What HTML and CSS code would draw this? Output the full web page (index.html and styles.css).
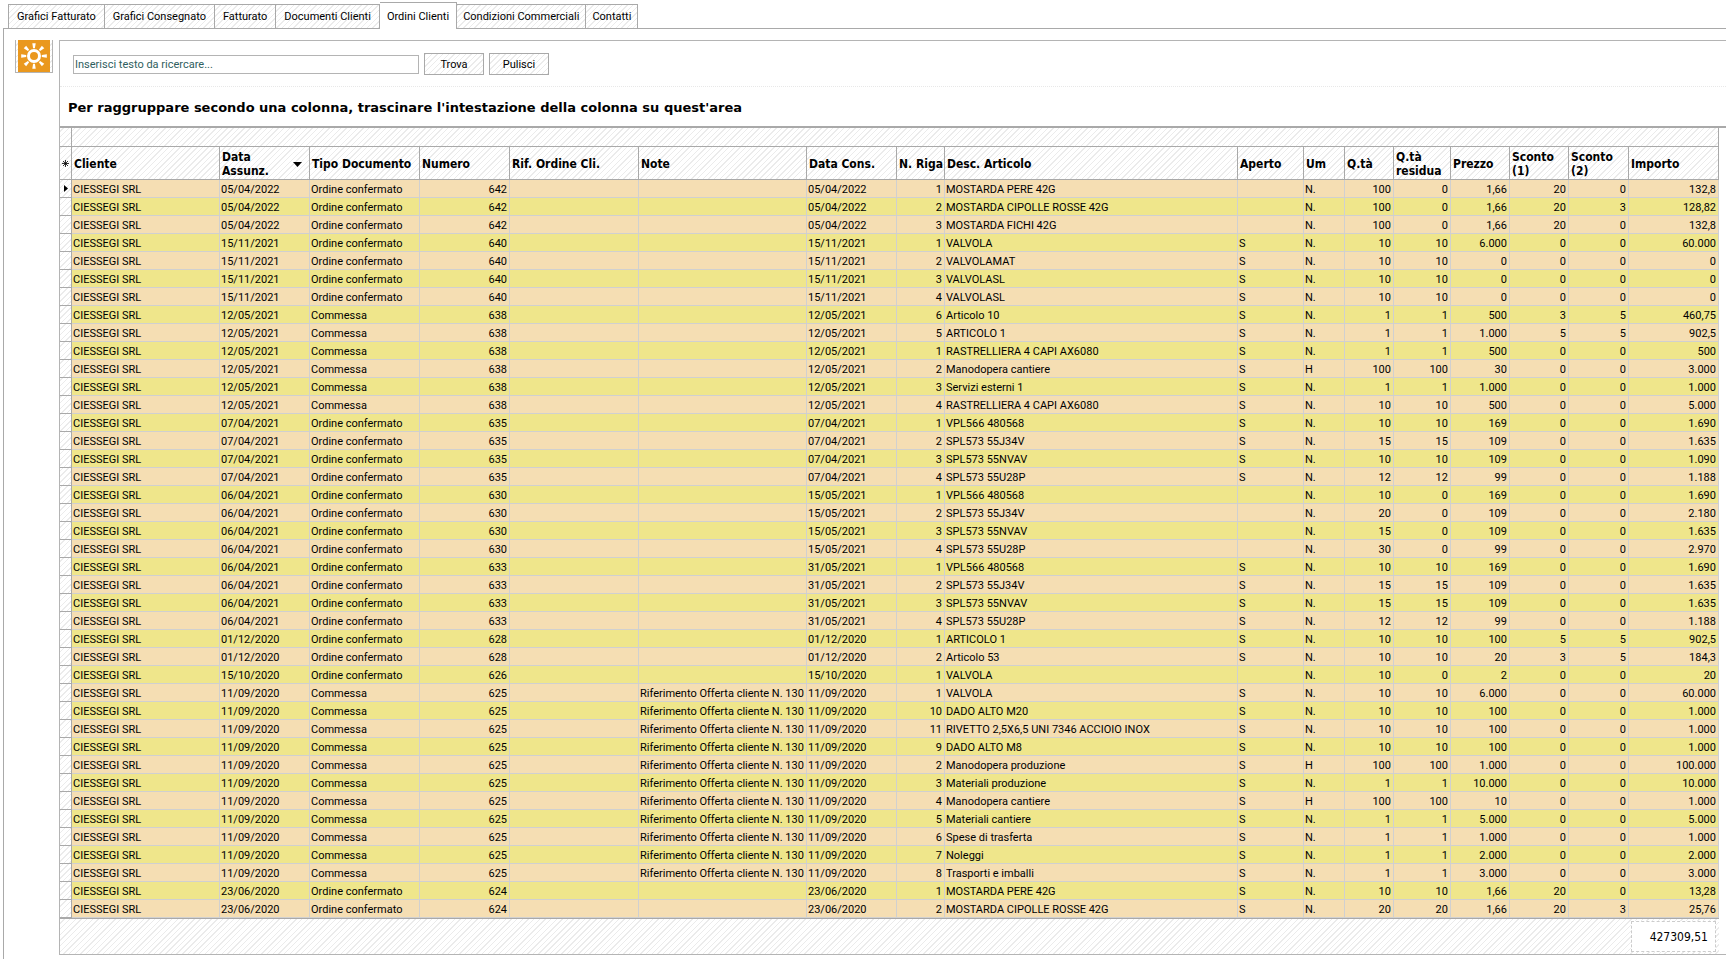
FILE: index.html
```html
<!DOCTYPE html>
<html lang="it">
<head>
<meta charset="utf-8">
<title>Ordini Clienti</title>
<link rel="stylesheet" href="styles.css">
</head>
<body>
<nav class="tabs" role="tablist">
  <button class="tab" role="tab">Grafici Fatturato</button>
  <button class="tab" role="tab">Grafici Consegnato</button>
  <button class="tab" role="tab">Fatturato</button>
  <button class="tab" role="tab">Documenti Clienti</button>
  <button class="tab active" role="tab" aria-selected="true">Ordini Clienti</button>
  <button class="tab" role="tab">Condizioni Commerciali</button>
  <button class="tab" role="tab">Contatti</button>
</nav>
<main class="page">
  <button class="sun hatch" aria-label="Opzioni">
    <svg viewBox="0 0 32 32" width="32" height="32" aria-hidden="true">
      <rect width="32" height="32" fill="#ea981e"/>
      <circle cx="16" cy="16" r="5.5" fill="none" stroke="#fff" stroke-width="3"/>
      <g fill="#fff">
        <path id="ray" d="M14.300 3.200h3.400l-.8 5h-1.800z"/>
        <use href="#ray" transform="rotate(45 16 16)"/>
        <use href="#ray" transform="rotate(90 16 16)"/>
        <use href="#ray" transform="rotate(135 16 16)"/>
        <use href="#ray" transform="rotate(180 16 16)"/>
        <use href="#ray" transform="rotate(225 16 16)"/>
        <use href="#ray" transform="rotate(270 16 16)"/>
        <use href="#ray" transform="rotate(315 16 16)"/>
      </g>
    </svg>
  </button>
  <section class="grid">
    <form class="search">
      <input class="query" type="text" placeholder="Inserisci testo da ricercare..." aria-label="Inserisci testo da ricercare">
      <button class="btn hatch" type="button">Trova</button>
      <button class="btn hatch" type="button">Pulisci</button>
    </form>
    <div class="group">Per raggruppare secondo una colonna, trascinare l'intestazione della colonna su quest'area</div>
    <div class="sheet">
      <table class="orders">
        <colgroup>
          <col class="c-ind"><col class="c-cli"><col class="c-date"><col class="c-type"><col class="c-date"><col class="c-ref"><col class="c-note"><col class="c-date"><col class="c-row"><col><col class="c-open"><col class="c-um"><col class="c-qty"><col class="c-res"><col class="c-price"><col class="c-price"><col class="c-disc"><col class="c-amt">
        </colgroup>
        <thead class="hatch">
          <tr class="band"><td></td><td colspan="17"></td></tr>
          <tr>
            <th class="ind"><svg width="7" height="7" viewBox="0 0 7 7" aria-hidden="true"><path d="M3.500 0v7M0 3.500h7M1 1l5 5M6 1l-5 5" stroke="#000" stroke-width=".8"/></svg></th>
            <th>Cliente</th>
            <th><span class="sorted">Data Assunz.<svg width="9" height="5" viewBox="0 0 9 5" aria-hidden="true"><path d="M0 0h9l-4.500 5z"/></svg></span></th>
            <th>Tipo Documento</th><th>Numero</th><th>Rif. Ordine Cli.</th><th>Note</th><th>Data Cons.</th><th>N. Riga</th><th>Desc. Articolo</th><th>Aperto</th><th>Um</th><th>Q.tà</th><th class="wrap">Q.tà residua</th><th>Prezzo</th><th class="wrap">Sconto (1)</th><th class="wrap">Sconto (2)</th><th>Importo</th>
          </tr>
        </thead>
        <tbody id="rows"></tbody>
      </table>
    </div>
    <footer class="summary hatch"><output class="total">427309,51</output></footer>
  </section>
</main>
<script src="orders.js"></script>
</body>
</html>
```
FILE: orders.js
```js
// Order heads: date, document type, number, note, delivery date
// Lines: row | article | open | unit | qty | remaining | price | discount 1 | discount 2 | amount
const OC = "Ordine confermato";
const CO = "Commessa";
const REF = "Riferimento Offerta cliente N. 130";
const orders = [
  ["05/04/2022", OC, 642, "", "05/04/2022", `1|MOSTARDA PERE 42G||N.|100|0|1,66|20|0|132,8
2|MOSTARDA CIPOLLE ROSSE 42G||N.|100|0|1,66|20|3|128,82
3|MOSTARDA FICHI 42G||N.|100|0|1,66|20|0|132,8`],
  ["15/11/2021", OC, 640, "", "15/11/2021", `1|VALVOLA|S|N.|10|10|6.000|0|0|60.000
2|VALVOLAMAT|S|N.|10|10|0|0|0|0
3|VALVOLASL|S|N.|10|10|0|0|0|0
4|VALVOLASL|S|N.|10|10|0|0|0|0`],
  ["12/05/2021", CO, 638, "", "12/05/2021", `6|Articolo 10|S|N.|1|1|500|3|5|460,75
5|ARTICOLO 1|S|N.|1|1|1.000|5|5|902,5
1|RASTRELLIERA 4 CAPI AX6080|S|N.|1|1|500|0|0|500
2|Manodopera cantiere|S|H|100|100|30|0|0|3.000
3|Servizi esterni 1|S|N.|1|1|1.000|0|0|1.000
4|RASTRELLIERA 4 CAPI AX6080|S|N.|10|10|500|0|0|5.000`],
  ["07/04/2021", OC, 635, "", "07/04/2021", `1|VPL566 480568|S|N.|10|10|169|0|0|1.690
2|SPL573 55J34V|S|N.|15|15|109|0|0|1.635
3|SPL573 55NVAV|S|N.|10|10|109|0|0|1.090
4|SPL573 55U28P|S|N.|12|12|99|0|0|1.188`],
  ["06/04/2021", OC, 630, "", "15/05/2021", `1|VPL566 480568||N.|10|0|169|0|0|1.690
2|SPL573 55J34V||N.|20|0|109|0|0|2.180
3|SPL573 55NVAV||N.|15|0|109|0|0|1.635
4|SPL573 55U28P||N.|30|0|99|0|0|2.970`],
  ["06/04/2021", OC, 633, "", "31/05/2021", `1|VPL566 480568|S|N.|10|10|169|0|0|1.690
2|SPL573 55J34V|S|N.|15|15|109|0|0|1.635
3|SPL573 55NVAV|S|N.|15|15|109|0|0|1.635
4|SPL573 55U28P|S|N.|12|12|99|0|0|1.188`],
  ["01/12/2020", OC, 628, "", "01/12/2020", `1|ARTICOLO 1|S|N.|10|10|100|5|5|902,5
2|Articolo 53|S|N.|10|10|20|3|5|184,3`],
  ["15/10/2020", OC, 626, "", "15/10/2020", `1|VALVOLA||N.|10|0|2|0|0|20`],
  ["11/09/2020", CO, 625, REF, "11/09/2020", `1|VALVOLA|S|N.|10|10|6.000|0|0|60.000
10|DADO ALTO M20|S|N.|10|10|100|0|0|1.000
11|RIVETTO 2,5X6,5 UNI 7346 ACCIOIO INOX|S|N.|10|10|100|0|0|1.000
9|DADO ALTO M8|S|N.|10|10|100|0|0|1.000
2|Manodopera produzione|S|H|100|100|1.000|0|0|100.000
3|Materiali produzione|S|N.|1|1|10.000|0|0|10.000
4|Manodopera cantiere|S|H|100|100|10|0|0|1.000
5|Materiali cantiere|S|N.|1|1|5.000|0|0|5.000
6|Spese di trasferta|S|N.|1|1|1.000|0|0|1.000
7|Noleggi|S|N.|1|1|2.000|0|0|2.000
8|Trasporti e imballi|S|N.|1|1|3.000|0|0|3.000`],
  ["23/06/2020", OC, 624, "", "23/06/2020", `1|MOSTARDA PERE 42G|S|N.|10|10|1,66|20|0|13,28
2|MOSTARDA CIPOLLE ROSSE 42G|S|N.|20|20|1,66|20|3|25,76`]
];
const numeric = new Set([3, 7, 11, 12, 13, 14, 15, 16]);
const body = document.getElementById("rows");
for (const [date, type, number, note, delivery, lines] of orders) {
  for (const line of lines.split("\n")) {
    const tr = body.insertRow();
    const mark = tr.insertCell();
    mark.className = "ind";
    if (body.rows.length === 1) {
      mark.innerHTML = '<svg width="4" height="7" viewBox="0 0 4 7" aria-hidden="true"><path d="M0 0l4 3.500-4 3.500z"/></svg>';
    }
    ["CIESSEGI SRL", date, type, number, "", note, delivery, ...line.split("|")].forEach((value, i) => {
      const td = tr.insertCell();
      td.textContent = value;
      if (numeric.has(i)) td.className = "num";
    });
  }
}
```
FILE: styles.css
```css
* { box-sizing: border-box; }
body {
  margin: 0;
  min-height: 100vh;
  display: flex;
  flex-direction: column;
  background: #fff;
  color: #000;
  font: 11px/15px Roboto, "DejaVu Sans Condensed", sans-serif;
}
button, input { font: inherit; color: inherit; margin: 0; }
.hatch, .tab, .ind {
  background: #fff repeating-linear-gradient(135deg, #fff 0 3px, #ebebeb 3px 4px) fixed;
}

.tabs {
  display: flex;
  align-items: flex-end;
  height: 29px;
  margin-left: 3px;
  padding-left: 5px;
  border-bottom: 1px solid #a9a9a9;
}
.tab {
  height: 24px;
  padding: 0 8px;
  border: 1px solid #a9a9a9;
  border-bottom: 0;
  white-space: nowrap;
}
.tab + .tab { border-left: 0; }
.tab.active {
  height: 27px;
  margin-bottom: -1px;
  padding: 0 7px;
  background: #fff;
}
.tab.active ~ .tab { padding: 0 6px; }

.page {
  flex: 1;
  display: flex;
  align-items: flex-start;
  margin-left: 3px;
  padding: 11px 0 4px 11px;
  border-left: 1px solid #a9a9a9;
}
.sun {
  flex: none;
  width: 38px;
  height: 33px;
  margin-right: 6px;
  padding: 0;
  border: 1px solid #b4b4b4;
  border-top: 0;
  display: grid;
  place-items: center;
}
.grid {
  flex: 1;
  min-width: 0;
  border: 1px solid #b4b4b4;
  border-right: 0;
}

.search {
  display: flex;
  align-items: center;
  gap: 5px;
  height: 46px;
  padding: 1px 0 0 13px;
  border-bottom: 1px dotted #e8e8e8;
}
.query {
  width: 346px;
  height: 19px;
  padding: 0 1px;
  border: 1px solid #b4b4b4;
}
.query::placeholder { color: #2f6060; opacity: 1; }
.btn {
  width: 60px;
  height: 22px;
  padding: 0;
  border: 1px solid #a9a9a9;
}

.group {
  height: 41px;
  padding: 0 8px;
  border-bottom: 2px solid #a9a9a9;
  font: bold 13px/41px "DejaVu Sans", sans-serif;
  white-space: nowrap;
}

.sheet { padding-right: 7px; }
.orders {
  width: 100%;
  table-layout: fixed;
  border-collapse: separate;
  border-spacing: 0;
  border-bottom: 1px solid #a9a9a9;
}
.c-ind { width: 12px; }
.c-cli { width: 148px; }
.c-date { width: 90px; }
.c-type { width: 110px; }
.c-ref { width: 129px; }
.c-note { width: 168px; }
.c-row { width: 48px; }
.c-open { width: 66px; }
.c-um { width: 41px; }
.c-qty { width: 49px; }
.c-res { width: 57px; }
.c-price { width: 59px; }
.c-disc { width: 60px; }
.c-amt { width: 90px; }

.orders th, .orders td {
  border: 1px solid #d0d0d0;
  border-width: 0 1px 1px 0;
  padding: 2px 2px 0 1px;
  white-space: nowrap;
}
.orders thead th, .orders thead td { border-color: #a9a9a9; }
.band { height: 19px; }
.orders th {
  height: 33px;
  padding-left: 2px;
  font: bold 12px/14px "DejaVu Sans Condensed", sans-serif;
  text-align: left;
}
.sorted {
  display: flex;
  align-items: center;
  justify-content: space-between;
  padding-right: 5px;
  white-space: normal;
}
.sorted svg { flex: none; }
.orders .wrap { white-space: normal; }
tbody tr { background: #f5deb3; }
tbody tr:nth-child(even) { background: #efe68b; }
.orders tbody td { height: 18px; }
.orders .ind {
  padding: 0;
  border-color: #a9a9a9;
  text-align: center;
}
.orders .ind svg { display: block; margin: auto; }
.orders .num { text-align: right; }

.summary {
  display: flex;
  justify-content: flex-end;
  height: 35px;
  padding: 2px 3px 2px 0;
  margin-right: 7px;
}
.total {
  width: 85px;
  padding-right: 7px;
  border: 1px dashed #ccc;
  background: #fff;
  font: 12px/30px "DejaVu Sans Condensed", sans-serif;
  text-align: right;
}
```
